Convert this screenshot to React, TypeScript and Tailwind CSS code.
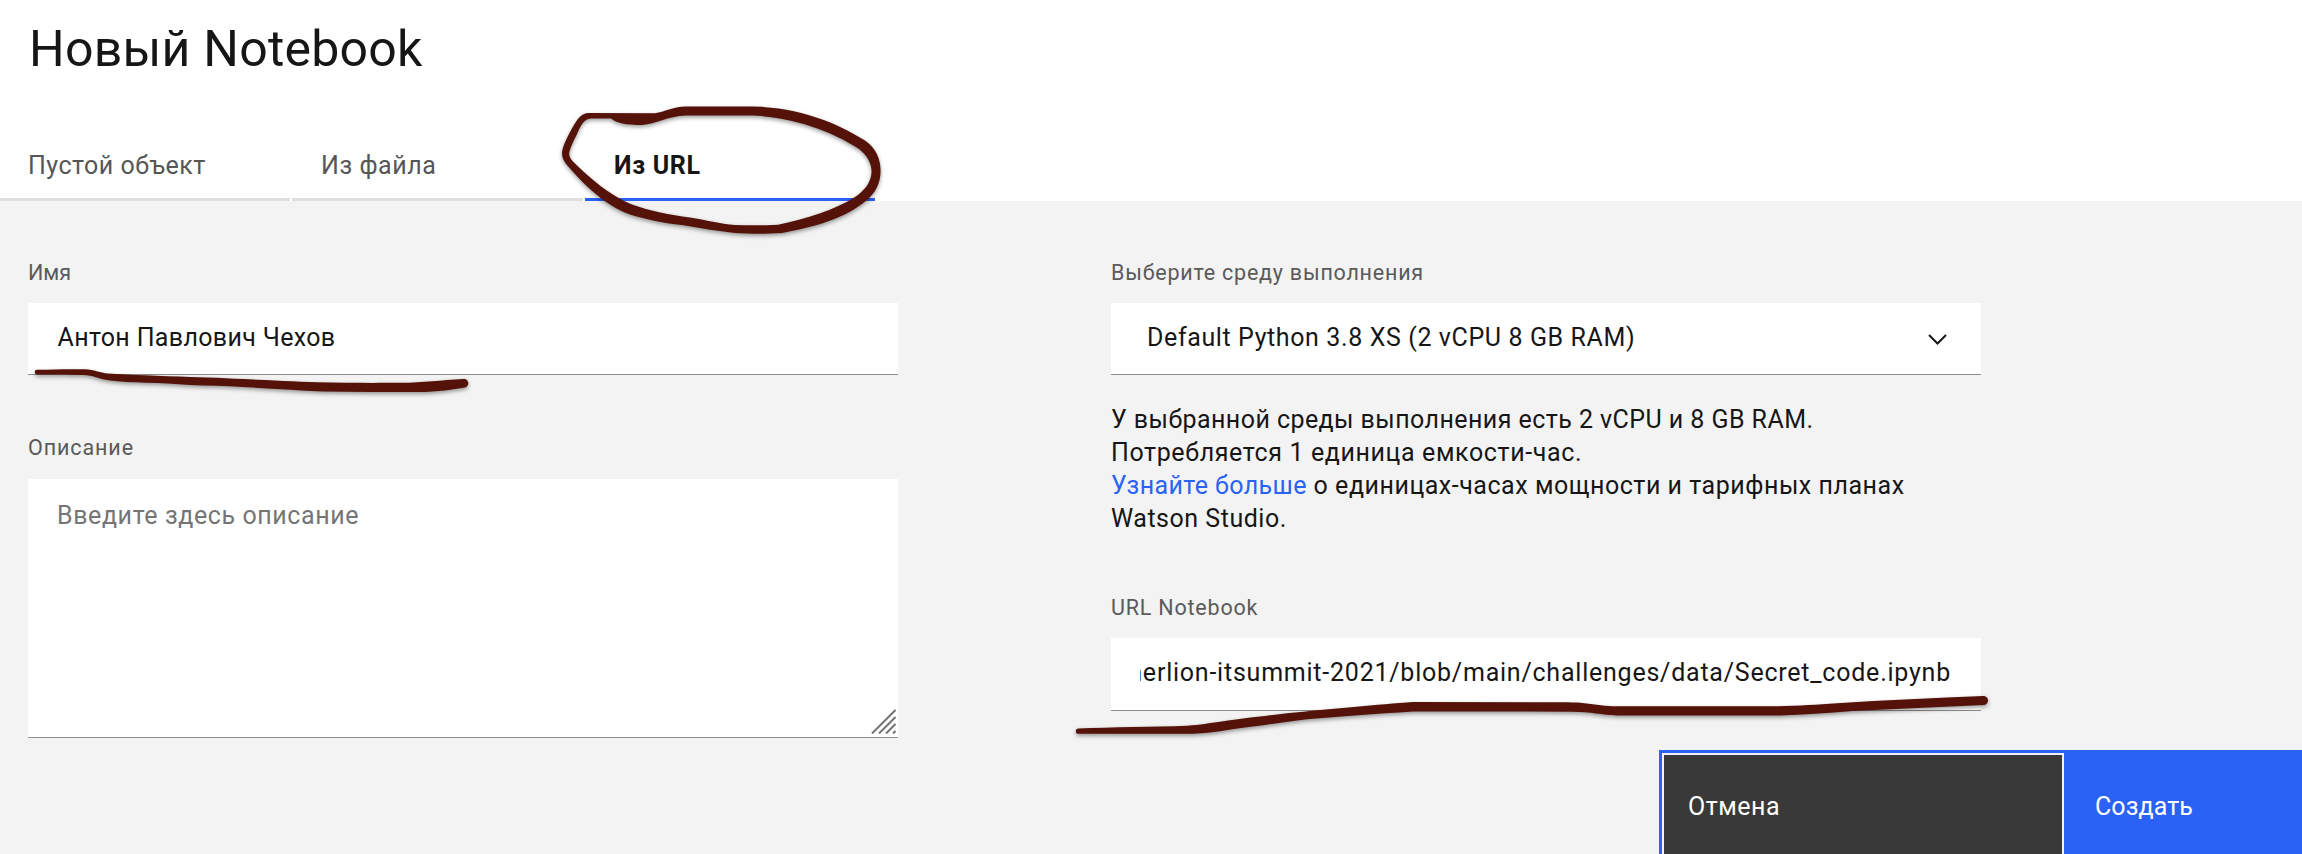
import type { ReactNode } from "react";

function Tab({ children, active = false, className = "" }: { children: ReactNode; active?: boolean; className?: string }) {
  return (
    <div
      role="tab"
      aria-selected={active}
      className={`h-[60px] border-b-[3px] pt-[7px] text-[25px] leading-9 whitespace-nowrap ${
        active ? "border-[#2b62f6] font-bold text-[#161616]" : "border-[#dfdfdf] text-[#565656]"
      } ${className}`}
    >
      {children}
    </div>
  );
}

function Label({ children, className = "" }: { children: ReactNode; className?: string }) {
  return <div className={`h-7 text-[21.5px] leading-7 whitespace-nowrap text-[#5a5a5a] ${className}`}>{children}</div>;
}

function InkMarks() {
  return (
    <svg
      aria-hidden="true"
      viewBox="0 0 2302 854"
      className="pointer-events-none absolute inset-0 h-[854px] w-[2302px] drop-shadow-[0_2px_2px_rgba(0,0,0,0.4)]"
      fill="#541209"
      fillRule="evenodd"
    >
      <path d="M588 113 L655 113.3 C665 112 672 107 686 106.6 L753 106.6 C797 107 836 122 865 140.5 C876 148 880.6 159 880.6 171 C880.5 184 875 193 867 200 C846 218 815 227 782 233 C768 234 750 234 735 233 C717 231 700 228 682 225 C662 223 645 219 630 214.5 C606 206 584 185 567 165 C563 160 562 157 562 152 C563 146 565 142 568 136 C573 126 578 117 583 114.5 Q585 113 588 113 Z M591 118.5 L611 118.5 C616 123 626 125 642 125 C656 124 667 116.5 686 115.6 L753 115.6 C792 117 832 131 859 149 C868 156 871.6 164 871.6 172 C871 183 864 191 855 197 C835 210 808 218 778 224.8 C765 225.5 750 225.5 735 225 C720 224 706 220 690 217.5 C670 215 650 211 632 204.5 C611 196 589 178 572 160.5 C569.5 157 569 155 569.3 152 C571 146 574 140 577 134 C581 125 584 118.8 591 118.5 Z" />
      <path d="M37 369.8 C52 369.2 70 369 85 369.2 C94 369.5 100 372.6 108 373.6 C130 375 160 376 190 377 C230 378 280 381 317 382.3 C345 383 375 383 400 382.8 C425 382.8 440 380 463 379 A4.3 4.3 0 0 1 465 387.4 C452 389 440 392 417 392 C385 392 355 392 323 391.5 C290 390 265 388 243 387 C225 386 207 385.6 190 385 C160 382 130 383 110 380.4 C97 379 94 375 83 375 C66 374.4 50 374.4 37 374.4 A2.3 2.3 0 0 1 37 369.8 Z" />
      <path d="M1078.5 728.5 C1110 727 1155 727 1187 725.7 C1200 725 1210 723 1220 721.8 C1245 718 1265 716 1287 713.3 C1330 709 1380 704.5 1413 702 L1540 702.3 C1560 702.3 1570 702.2 1580 702.8 C1592 703.8 1602 706 1613 706.3 L1777 706.3 C1800 706 1817 704.5 1837 703.3 C1885 700 1935 698 1983 696 A4.5 4.5 0 0 1 1984 705 C1940 707 1895 709 1853 711 C1827 713 1803 715 1780 715.4 L1617 715.4 C1602 715 1590 712 1573 711.8 L1527 711.4 L1413 711.4 C1375 714 1340 716 1307 719.3 C1285 722 1267 725 1247 727.3 C1225 730 1215 733 1193 733.8 L1078.5 733.8 A2.65 2.65 0 0 1 1078.5 728.5 Z" />
    </svg>
  );
}

export default function App() {
  return (
    <div className="relative flex h-[854px] w-[2302px] flex-col overflow-hidden bg-[#f3f3f3] font-['Roboto','Noto_Sans',sans-serif] text-[25px] leading-9 text-[#161616]">
      <header className="flex h-[201px] shrink-0 flex-col justify-between bg-white pt-[17px]">
        <h1 className="pl-[29px] text-[50px] leading-[64px] tracking-[0.23px]">Новый Notebook</h1>
        <div role="tablist" className="flex gap-0.5">
          <Tab className="w-[290px] pl-7 tracking-[0.5px]">Пустой объект</Tab>
          <Tab className="w-[291px] pl-[29px] tracking-[0.55px]">Из файла</Tab>
          <Tab active className="w-[290px] pl-[29px] tracking-[0.7px]">Из URL</Tab>
        </div>
      </header>

      <main className="flex h-[549px] shrink-0 gap-[213px] pt-[58px] pl-7">
        <section className="w-[870px]">
          <Label>Имя</Label>
          <div className="mt-4 h-[72px] border-b border-[#8d8d8d] bg-white pt-[17px] pl-[29.5px] tracking-[0.34px]">
            Антон Павлович Чехов
          </div>
          <Label className="mt-[59px] tracking-[0.9px]">Описание</Label>
          <div className="relative mt-[17px] h-[259px] border-b border-[#8d8d8d] bg-white pt-[19px] pl-[29px] tracking-[0.6px] text-[#757575]">
            Введите здесь описание
            <svg aria-hidden="true" viewBox="0 0 25 25" className="absolute right-0.5 bottom-[3px] size-[25px]" fill="none" stroke="#737373" strokeWidth="2">
              <path d="M1 24.5 L24.5 1 M8 24.5 L24.5 8 M15 24.5 L24.5 15 M22 24.5 L24.5 22" />
            </svg>
          </div>
        </section>

        <section className="w-[870px]">
          <Label className="tracking-[0.77px]">Выберите среду выполнения</Label>
          <div className="mt-4 flex h-[72px] justify-between border-b border-[#8d8d8d] bg-white pt-[17px] pr-[34px] pl-9">
            <span className="tracking-[0.61px]">Default Python 3.8 XS (2 vCPU 8 GB RAM)</span>
            <svg aria-hidden="true" viewBox="0 0 19 11" className="mt-3.5 h-[11px] w-[19px]" fill="none" stroke="#161616" strokeWidth="2">
              <path d="M1 1 L9.5 9.5 L18 1" />
            </svg>
          </div>
          <p className="mt-7 leading-[33px] whitespace-nowrap">
            <span className="tracking-[0.44px]">У выбранной среды выполнения есть 2 vCPU и 8 GB RAM.</span>
            <br />
            <span className="tracking-[0.62px]">Потребляется 1 единица емкости-час.</span>
            <br />
            <a className="tracking-[0.4px] text-[#2b62f6]">Узнайте больше</a>
            <span className="tracking-[0.53px]"> о единицах-часах мощности и тарифных планах</span>
            <br />
            <span className="tracking-[0.52px]">Watson Studio.</span>
          </p>
          <Label className="mt-[59px] tracking-[0.8px]">URL Notebook</Label>
          <div className="mt-4 h-[73px] border-b border-[#8d8d8d] bg-white pt-[17px] pr-[30px] pl-[29px]">
            <div className="flex justify-end overflow-hidden tracking-[0.77px] whitespace-nowrap">
              <span>merlion-itsummit-2021/blob/main/challenges/data/Secret_code.ipynb</span>
            </div>
          </div>
        </section>
      </main>

      <footer className="flex h-[104px] shrink-0 justify-end text-white">
        <button className="flex w-[405px] bg-[#2b62f6] pt-[3px] pl-[3px] text-left">
          <span className="h-[101px] w-full border-2 border-b-0 border-[#f3f3f3] bg-[#393939] pt-[34px] pl-6 tracking-[0.5px]">Отмена</span>
        </button>
        <button className="flex w-[238px] bg-[#2b62f6] pt-[39px] pl-[31px] text-left tracking-[0.1px]">Создать</button>
      </footer>

      <InkMarks />
    </div>
  );
}
